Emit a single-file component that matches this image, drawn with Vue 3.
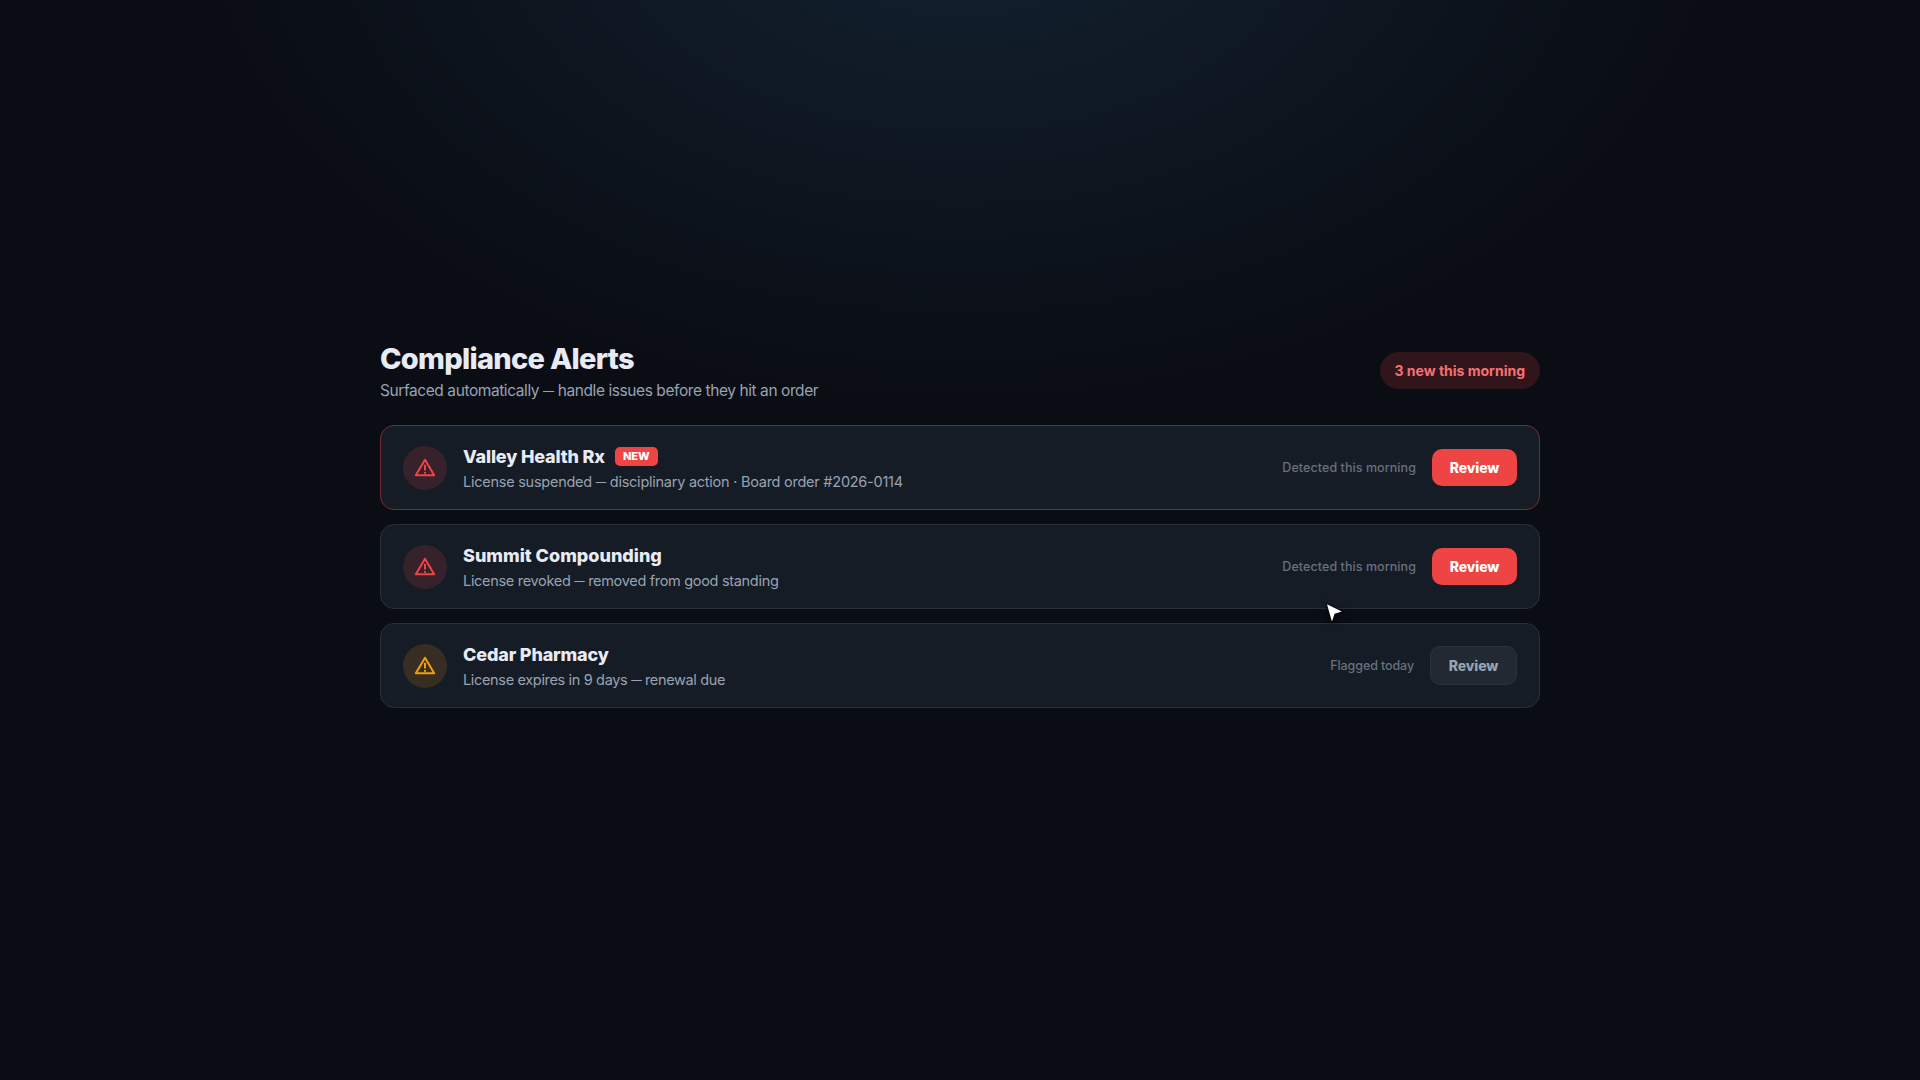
<script setup>
const alerts = [
  { id: 'valley', name: 'Valley Health Rx', badge: 'NEW', status: 'License suspended', note: 'disciplinary action · Board order #2026-0114', time: 'Detected this morning', tone: 'danger', fresh: true },
  { id: 'summit', name: 'Summit Compounding', status: 'License revoked', note: 'removed from good standing', time: 'Detected this morning', tone: 'danger' },
  { id: 'cedar', name: 'Cedar Pharmacy', status: 'License expires in 9 days', note: 'renewal due', time: 'Flagged today', tone: 'warning' },
]
</script>

<template>
  <main class="page">
    <section class="panel">
      <header class="head">
        <div>
          <h1 class="title">Compliance Alerts</h1>
          <p class="subtitle">Surfaced automatically <span class="dash">—</span> handle issues before they hit an order</p>
        </div>
        <span class="pill">3 new this morning</span>
      </header>
      <div class="list">
        <article v-for="a in alerts" :key="a.id" class="card" :class="[a.id, a.tone, { fresh: a.fresh }]">
          <span class="icon">
            <svg width="22" height="22" viewBox="0 0 24 24" fill="none" stroke="currentColor" stroke-width="2.2" stroke-linejoin="round">
              <path d="M12 3 22 20H2Z" />
              <path d="M12 8.5v6.3M12 16.4v2" />
            </svg>
          </span>
          <div class="body">
            <div class="row">
              <h2 class="name">{{ a.name }}</h2>
              <span v-if="a.badge" class="badge">{{ a.badge }}</span>
            </div>
            <p class="detail">{{ a.status }} <span class="dash">—</span> {{ a.note }}</p>
          </div>
          <span class="time">{{ a.time }}</span>
          <button class="review" type="button">Review</button>
        </article>
      </div>
    </section>
    <svg class="cursor" width="30" height="30" viewBox="0 0 30 30" aria-hidden="true">
      <path d="M6 5.2 20.8 12.6 13.6 14.7 10.9 22.4Z" fill="#fff" stroke="#06080c" stroke-width="1.8" paint-order="stroke" />
    </svg>
  </main>
</template>

<style>
body { margin: 0; background: #0a0d14; }
</style>

<style scoped>
.page {
  min-height: 1080px;
  box-sizing: border-box;
  padding-top: 340px;
  font-family: Inter, "Open Sans", sans-serif;
  color: #e8ebf4;
  background: radial-gradient(1200px 800px at 50% -10%, #132231, transparent 63%) #0a0d14;
}
.panel { width: 1160px; margin: 0 auto; }
.head { display: flex; justify-content: space-between; align-items: center; margin-bottom: 24px; }
h1, h2, p { margin: 0; }
.title { font-size: 29px; line-height: 37px; font-weight: 800; letter-spacing: -0.72px; }
.subtitle { margin-top: 3px; font-size: 15.5px; line-height: 21px; letter-spacing: -0.42px; color: #98a3b2; }
.dash { font-size: 0.72em; line-height: 1; font-weight: 500; vertical-align: 0.1em; }
.pill {
  padding: 9px 15px;
  border-radius: 99px;
  font-size: 14px;
  line-height: 19px;
  font-weight: 700;
  background: #30151b;
  color: #f87171;
}
.list { display: flex; flex-direction: column; gap: 14px; }
.card {
  display: flex;
  align-items: center;
  gap: 16px;
  height: 85px;
  box-sizing: border-box;
  padding: 0 22px;
  border: 1px solid #27303b;
  border-radius: 14px;
  background: #161c25;
}
.card.fresh { border-color: #762b34; }
.icon {
  display: grid;
  place-items: center;
  width: 44px;
  height: 44px;
  margin-top: 1px;
  border-radius: 50%;
  background: #37212a;
  color: #ef4444;
}
.warning .icon { background: #372d22; color: #f59e0b; }
.body { flex: 1; padding-top: 1px; }
.row { display: flex; align-items: center; gap: 10px; }
.name { font-size: 18px; line-height: 24px; font-weight: 800; letter-spacing: -0.16px; }
.summit .name { letter-spacing: 0; }
.badge {
  padding: 0 8px;
  border-radius: 5px;
  font-size: 11px;
  line-height: 19px;
  font-weight: 800;
  background: #ef4444;
  color: #fff;
}
.detail { margin-top: 2px; font-size: 14.5px; line-height: 21px; letter-spacing: -0.25px; color: #98a3b2; }
.summit .detail { letter-spacing: -0.31px; }
.cedar .detail { letter-spacing: -0.34px; }
.time { font-size: 12.5px; font-weight: 500; letter-spacing: 0.07px; color: #66717e; }
.cedar .time { letter-spacing: -0.1px; }
.review {
  width: 85px;
  padding: 9px 0;
  border: 0;
  border-radius: 10px;
  background: #ef4444;
  color: #fff;
  font: 800 14px/19px Inter, "Open Sans", sans-serif;
  letter-spacing: -0.1px;
}
.warning .review { width: 87px; border: 1px solid #2a313c; background: #222933; color: #97a3b0; }
.cursor { position: absolute; left: 1321px; top: 599px; filter: drop-shadow(0 2px 3px rgba(0, 0, 0, 0.5)); }
</style>
